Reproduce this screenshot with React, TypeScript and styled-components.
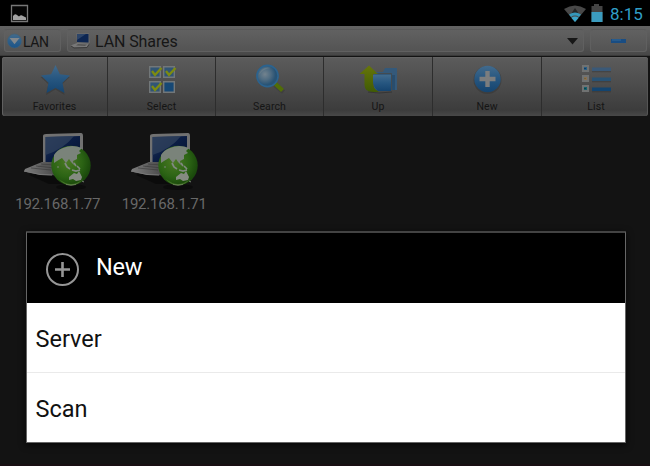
import React from "react";
import styled, { createGlobalStyle } from "styled-components";

const GlobalStyle = createGlobalStyle`
  * { box-sizing: border-box; }
  body { margin: 0; background: #131313; font-family: Roboto, sans-serif; overflow: hidden; }
  svg { display: block; flex: none; }
`;

const Screen = styled.div`
  position: relative;
  width: 650px;
  height: 466px;
  display: flex;
  flex-direction: column;
  background: #131313;
  border-bottom: 2px solid #180f13;
`;

const StatusBar = styled.div`
  height: 26px;
  background: #000;
  display: flex;
  align-items: center;
  justify-content: space-between;
  padding: 0 7px 0 10px;
`;

const StatusIcons = styled.div`
  display: flex;
  align-items: center;
`;

const Clock = styled.span`
  width: 33px;
  margin-left: 7px;
  padding-top: 1px;
  font-size: 17px;
  line-height: 24px;
  white-space: nowrap;
  color: #309fc7;
`;

const AddressBar = styled.div`
  height: 30px;
  flex: none;
  display: flex;
  gap: 6px;
  padding: 3px 3px 4px 4px;
  background: linear-gradient(#626262, #555 60%, #474747);
  border-bottom: 1px solid #393939;
`;

const Field = styled.div<{ $width: number; $center?: boolean }>`
  width: ${(p) => p.$width}px;
  height: 23px;
  display: flex;
  align-items: center;
  justify-content: ${(p) => (p.$center ? "center" : "flex-start")};
  background: linear-gradient(#616161, #545454);
  border: 1px solid #606060;
  border-top-color: #585858;
  border-radius: 3px;
`;

const FieldText = styled.span<{ $size: number; $left: number; $spacing: number }>`
  margin-left: ${(p) => p.$left}px;
  padding-top: 2px;
  font-size: ${(p) => p.$size}px;
  line-height: 20px;
  letter-spacing: ${(p) => p.$spacing}px;
  white-space: nowrap;
  color: #161616;
`;

const Spacer = styled.div`
  flex: 1;
`;

const Toolbar = styled.div`
  height: 59px;
  flex: none;
  margin: 1px 2px 0;
  display: grid;
  grid-template-columns: 106px 108px 108px 109px 109px 106px;
  background: linear-gradient(#5c5c5c, #4b4b4b 50%, #3c3c3c 90%, #484848);
  border-radius: 3px;
  box-shadow: inset 0 1px #636363, inset 1px 0 #606060, inset -1px 0 #555;
  overflow: hidden;
`;

const Tool = styled.div`
  display: flex;
  flex-direction: column;
  align-items: center;
  padding-top: 7px;
  border-right: 1px solid #2d2d2d;
  &:last-child { border-right: 0; padding-left: 2px; }
`;

const ToolLabel = styled.span`
  margin-top: 4px;
  font-size: 10.5px;
  line-height: 14px;
  letter-spacing: 0.1px;
  color: #151515;
`;

const Shares = styled.div`
  display: flex;
  padding: 15px 0 0 4px;
`;

const Share = styled.div`
  width: 106.5px;
  display: flex;
  flex-direction: column;
  align-items: center;
`;

const ShareLabel = styled.span`
  margin: 1px 0 0 1px;
  font-size: 15px;
  line-height: 20px;
  letter-spacing: -0.22px;
  color: #686868;
`;

const Dialog = styled.div`
  position: absolute;
  left: 26px;
  top: 231px;
  width: 600px;
  height: 212px;
  display: flex;
  flex-direction: column;
  border: 1px solid #666;
  border-top: 2px solid #434343;
  border-radius: 1px;
  background: #fff;
  box-shadow: 0 2px 7px rgba(0, 0, 0, 0.7);
`;

const DialogHeader = styled.div`
  height: 70px;
  flex: none;
  display: flex;
  align-items: center;
  padding: 2px 0 0 18px;
  background: #000;
`;

const DialogTitle = styled.span`
  margin: -5px 0 0 16px;
  font-size: 23.5px;
  line-height: 30px;
  letter-spacing: -0.2px;
  color: #fff;
`;

const DialogRow = styled.div`
  height: 69px;
  flex: none;
  display: flex;
  align-items: center;
  padding: 3px 0 0 8.5px;
  font-size: 23.5px;
  color: #111;
  & + & { height: 70px; padding-top: 2px; border-top: 1px solid #eaeaea; }
`;

const PictureIcon = () => (
  <svg width="19" height="19" viewBox="0 0 19 19">
    <path d="M1.5 1.5h16v16h-16z" fill="#050505" stroke="#777" strokeWidth="1.3" />
    <path d="M3 16v-4q2-3 4-1l2 1.5q2-2 4-.5l3 1.5V16z" fill="#a2a2a2" />
  </svg>
);

const WifiIcon = () => (
  <svg width="22" height="17" viewBox="0 0 22 17">
    <path d="M0 4Q11-3 22 4L11 17z" fill="#484848" />
    <path d="M11 3l4 6H7z" fill="#252525" />
    <path d="M5 9.5q6-4 12 0l-2 2.4q-4-2.7-8 0z" fill="#3597b9" />
    <path d="M7.3 12.8q3.7-2.4 7.4 0L11 17z" fill="#3ba5c9" />
  </svg>
);

const BatteryIcon = () => (
  <svg width="12" height="18" viewBox="0 0 12 18">
    <path d="M3 0h5v2h3.5v16H.5V2H3z" fill="#444" />
    <path d="M.5 8h11v10H.5z" fill="#3b9cbf" />
  </svg>
);

const DropIcon = () => (
  <svg width="15" height="16" viewBox="0 0 15 16">
    <defs>
      <linearGradient id="drop" x2="0" y2="1">
        <stop stopColor="#436b8b" /><stop offset="1" stopColor="#1a5489" />
      </linearGradient>
    </defs>
    <circle cx="7.5" cy="8" r="7" fill="url(#drop)" stroke="#425f75" strokeWidth=".6" />
    <path d="M2.6 5h10L7.5 11.3z" fill="#83888c" />
  </svg>
);

const SmallLaptop = () => (
  <svg width="21" height="17" viewBox="0 0 21 17">
    <path d="M6 1h13l1 10H7z" fill="#686868" />
    <path d="M7 2h11.5v8.5L7 10z" fill="#0d2652" />
    <path d="M7 2h9L7 8z" fill="#2c4468" />
    <path d="M7 11l12 .5-2 3.5L4 15.5.5 13.5z" fill="#777" />
    <path d="M8 12l9 .6-2 1.5-9-.6z" fill="#565656" />
    <path d="M1 14l3 2 13-.5 2-3" fill="none" stroke="#3c3c3c" />
  </svg>
);

const ArrowIcon = () => (
  <svg width="11" height="7" viewBox="0 0 11 7">
    <path d="M0 0h11L5.5 6.5z" fill="#171717" />
  </svg>
);

const MinusIcon = () => (
  <svg width="15" height="4" viewBox="0 0 15 4">
    <path d="M0 0h15v4H0z" fill="#194d83" />
    <path d="M1 1h9" stroke="#376b97" />
  </svg>
);

const ToolGradients = () => (
  <defs>
    <linearGradient id="blue" x2="0" y2="1">
      <stop stopColor="#426b8d" /><stop offset=".5" stopColor="#265680" /><stop offset="1" stopColor="#15446f" />
    </linearGradient>
    <radialGradient id="glass" cx=".38" cy=".42">
      <stop stopColor="#73838e" /><stop offset=".55" stopColor="#4e6b81" /><stop offset="1" stopColor="#285375" />
    </radialGradient>
    <linearGradient id="olive" x2="0" y2="1">
      <stop stopColor="#677609" /><stop offset="1" stopColor="#405b05" />
    </linearGradient>
  </defs>
);

const FavoritesIcon = () => (
  <svg width="38" height="32" viewBox="0 0 38 32">
    <ToolGradients />
    <path d="M19.5 2l4.4 9.8 10 1.2-7.8 7.3L28.5 31l-9-5.5L10 31l2.3-10.7L4.5 13l10.6-1.2z" fill="#333" opacity=".5" />
    <path d="M19.5 1l4.4 9.3L34 11.5l-7.5 7.3L28.5 29l-9-5-9 5 2-10.2L5 11.5l10.1-1.2z" fill="url(#blue)" />
  </svg>
);

const SelectIcon = () => (
  <svg width="38" height="32" viewBox="0 0 38 32">
    {[[6, 2], [20, 2], [6, 17], [20, 17]].map(([x, y], i) => (
      <g key={i} transform={`translate(${x} ${y})`}>
        <path d="M.7.7h10.6v10.6H.7z" fill={i === 3 ? "#164875" : "#315574"} stroke="#727779" strokeWidth="1.4" />
        {i < 3 && <path d="M3 5l3 4 6.5-7" fill="none" stroke="#7d8b10" strokeWidth="2.4" />}
      </g>
    ))}
  </svg>
);

const SearchIcon = () => (
  <svg width="38" height="32" viewBox="0 0 38 32">
    <path d="M24 21l8.5 7" stroke="#333" strokeWidth="4.5" opacity=".4" />
    <path d="M24 19.5l7.5 7" stroke="#516d07" strokeWidth="4.4" />
    <circle cx="16.5" cy="12" r="10.6" fill="url(#glass)" stroke="#2b638f" strokeWidth="1.6" />
    <path d="M8 11a9 9 0 0 1 12-7q-9 1-12 7" fill="#7b8991" opacity=".45" />
  </svg>
);

const UpIcon = () => (
  <svg width="40" height="32" viewBox="0 0 40 32">
    <path d="M16 8h9l2-4h12v22H16z" fill="#34597a" />
    <path d="M34 11v15h3V11z" fill="#294d6d" />
    <path d="M15 11h18v16H20q-5-4-5-9z" fill="url(#blue)" />
    <path d="M15 9.5h18.5V27" fill="none" stroke="#424b51" />
    <path d="M11 1.5L1.5 10h5v11q0 7 8.5 7h6q-6-3-6-9v-9h5z" fill="url(#olive)" />
    <path d="M10 28q10 2 24 0" fill="none" stroke="#292929" opacity=".6" />
  </svg>
);

const NewIcon = () => (
  <svg width="38" height="32" viewBox="0 0 38 32">
    <circle cx="19.5" cy="16" r="14" fill="#303030" opacity=".4" />
    <circle cx="19.5" cy="15" r="13.2" fill="url(#blue)" />
    <path d="M19.5 7v16M11.5 15h16" stroke="#7b7d7e" strokeWidth="4.4" />
  </svg>
);

const ListIcon = () => (
  <svg width="38" height="32" viewBox="0 0 38 32">
    {[1, 11, 21].map((y, i) => (
      <g key={y} transform={`translate(5 ${y})`}>
        <path d="M0 0h7v7H0z" fill="#707272" />
        <path d="M2 2h3v3H2z" fill={["#275f87", "#8b704f", "#14616f"][i]} />
        <path d="M2 3.5h2" stroke={["#153c64", "#6f6541", "#0c424b"][i]} />
        <path d="M10 5.8h19" stroke="#303030" strokeWidth="3" opacity=".4" />
        <path d="M10 4.2h19" stroke={["#3b5977", "#295273", "#13446f"][i]} strokeWidth="3.4" />
      </g>
    ))}
  </svg>
);

const NetworkComputer = () => (
  <svg width="72" height="62" viewBox="0 0 72 62">
    <defs>
      <linearGradient id="screen" x2="1" y2="1">
        <stop stopColor="#273b5b" /><stop offset=".45" stopColor="#0b1d44" /><stop offset="1" stopColor="#07132f" />
      </linearGradient>
      <radialGradient id="earth" cx=".4" cy=".4" r=".6">
        <stop stopColor="#4b7923" /><stop offset=".65" stopColor="#2b6314" /><stop offset="1" stopColor="#1b4a0c" />
      </radialGradient>
      <linearGradient id="metal" x2="1">
        <stop stopColor="#7d7d7d" /><stop offset="1" stopColor="#363636" />
      </linearGradient>
    </defs>
    <path d="M8 44l20 9h17L30 35z" fill="#080808" opacity=".7" />
    <ellipse cx="50" cy="56" rx="15" ry="3" fill="#080808" opacity=".6" />
    <path d="M22 5q0-2 3-2l35-1q2 0 2 3v32H22z" fill="#717171" />
    <path d="M24.5 6L59 5v28H24.5z" fill="url(#screen)" />
    <path d="M24.5 6L53 5q-10 13-28.5 19z" fill="#2e405b" opacity=".8" />
    <path d="M21 31h25v13.5L20 44 3 40.5 4 38z" fill="url(#metal)" />
    <path d="M22 33h14l-4 4-16-1z" fill="#555" opacity=".7" />
    <path d="M10 37l20 2M15 35l19 2M20 33l14 1" stroke="#343434" strokeWidth=".8" opacity=".65" />
    <path d="M3 40l16 3.5 12 .5" fill="none" stroke="#777" />
    <circle cx="50" cy="34.5" r="19.7" fill="url(#earth)" />
    <path d="M33 24q3-5 9-7 9-4 19 0l-3 3 2 2-4 2v4l-4 2 1 4-3-3-2-3-3 4-4-5-5 3-3 2z" fill="#7a837a" />
    <path d="M44 32l2 4 3 2M53 32l2 3M51 39l4 1 4-1M56 35l3 3" fill="none" stroke="#818981" strokeWidth="1.7" />
    <path d="M48 46l5-4 3 1 2-3 3 6-1 3-5 1-3-2-4 1z" fill="#858b82" />
    <path d="M61 50l2 1M36 36h2" stroke="#7b8478" />
    <path d="M38 48q12 10 24 0-5 6.5-12 6.5T38 48" fill="#5d883b" opacity=".6" />
    <path d="M45 53.5q5 1.5 10 0" fill="none" stroke="#889179" opacity=".6" />
  </svg>
);

const CirclePlus = () => (
  <svg width="35" height="35" viewBox="0 0 35 35">
    <circle cx="17.5" cy="17.5" r="15.5" fill="none" stroke="#969696" strokeWidth="2" />
    <path d="M17.5 10v15M10 17.5h15" stroke="#969696" strokeWidth="2.6" />
  </svg>
);

const tools = [
  { label: "Favorites", Icon: FavoritesIcon },
  { label: "Select", Icon: SelectIcon },
  { label: "Search", Icon: SearchIcon },
  { label: "Up", Icon: UpIcon },
  { label: "New", Icon: NewIcon },
  { label: "List", Icon: ListIcon },
];

const StatusGap = styled.div`
  width: 5px;
`;
const ArrowSlot = styled.div`
  margin: 1px 5px 0 0;
`;
const LocationIcon = styled.div`
  margin: 0 0 0 2px;
`;

export default function App() {
  return (
    <>
      <GlobalStyle />
      <Screen>
        <StatusBar>
          <PictureIcon />
          <StatusIcons>
            <WifiIcon />
            <StatusGap />
            <BatteryIcon />
            <Clock>8:15</Clock>
          </StatusIcons>
        </StatusBar>
        <AddressBar>
          <Field $width={57}>
            <LocationIcon><DropIcon /></LocationIcon>
            <FieldText $size={14} $left={1} $spacing={-0.45}>LAN</FieldText>
          </Field>
          <Field $width={517}>
            <LocationIcon><SmallLaptop /></LocationIcon>
            <FieldText $size={16} $left={4} $spacing={-0.1}>LAN Shares</FieldText>
            <Spacer />
            <ArrowSlot><ArrowIcon /></ArrowSlot>
          </Field>
          <Field $width={57} $center><MinusIcon /></Field>
        </AddressBar>
        <Toolbar>
          {tools.map(({ label, Icon }) => (
            <Tool key={label}><Icon /><ToolLabel>{label}</ToolLabel></Tool>
          ))}
        </Toolbar>
        <Shares>
          {["192.168.1.77", "192.168.1.71"].map((address) => (
            <Share key={address}><NetworkComputer /><ShareLabel>{address}</ShareLabel></Share>
          ))}
        </Shares>
        <Dialog>
          <DialogHeader><CirclePlus /><DialogTitle>New</DialogTitle></DialogHeader>
          <DialogRow>Server</DialogRow>
          <DialogRow>Scan</DialogRow>
        </Dialog>
      </Screen>
    </>
  );
}
